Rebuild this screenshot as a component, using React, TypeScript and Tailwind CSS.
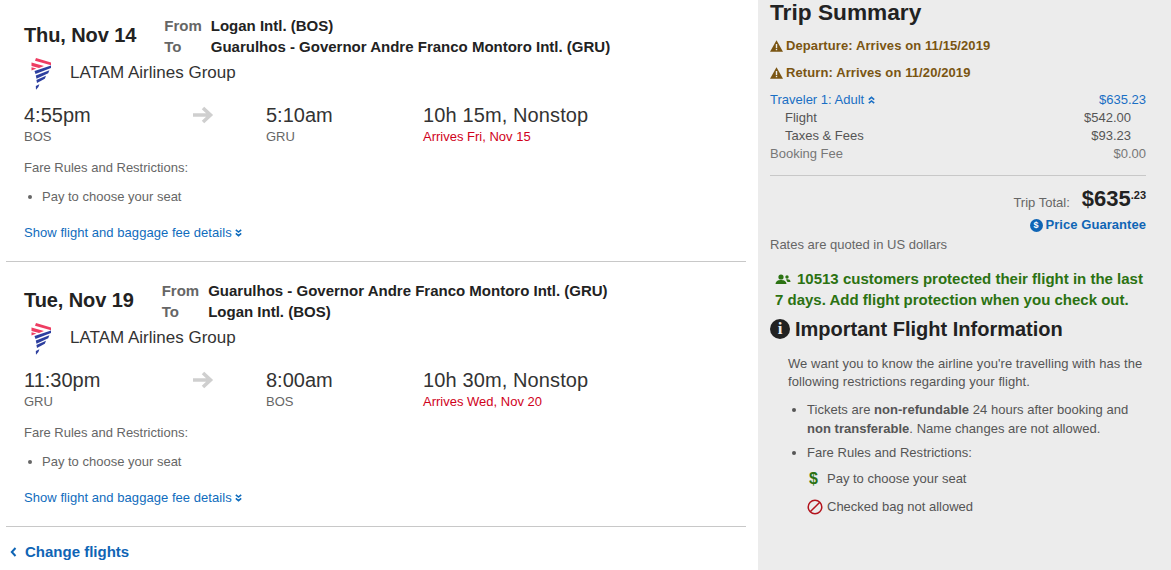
import React from "react";

const Logo = () => (
  <svg width="20" height="32" viewBox="0 0 20 32" className="ml-[7px] shrink-0">
    <path d="M5 0 L20 4.6 L20 7.2 L4 2.8 Z" fill="#ee3d62" />
    <path d="M0.5 4.4 L13 8 L8 10 L0.5 8 Z" fill="#ee3d62" />
    <path d="M0.5 9.2 L5.4 10.6 L0.5 12.6 Z" fill="#ee3d62" />
    <path d="M20 7.6 L20 10 L4.5 16 L3.5 13 Z" fill="#2d3f9f" />
    <path d="M18.4 12.2 L17.2 15.2 L5.5 20.8 L4.8 17.6 Z" fill="#2d3f9f" />
    <path d="M15 17.8 L13.8 20.8 L6 25 L5.4 22 Z" fill="#2d3f9f" />
    <path d="M8.4 26.2 L7.4 29 L5 31.8 L4.8 28 Z" fill="#2d3f9f" />
  </svg>
);

const ChevronsDown = ({ up = false }: { up?: boolean }) => (
  <svg width="7" height="8" viewBox="0 0 7 8" className={up ? "inline-block rotate-180" : "inline-block"}>
    <path d="M0.8 0.8 L3.5 3 L6.2 0.8 M0.8 4.4 L3.5 6.6 L6.2 4.4" fill="none" stroke="currentColor" strokeWidth="1.6" />
  </svg>
);

const Arrow = () => (
  <svg width="22" height="18" viewBox="0 0 22 18">
    <path d="M1 9 H18 M11 2 L18.5 9 L11 16" fill="none" stroke="#cfcfcf" strokeWidth="3.6" />
  </svg>
);

const Warn = () => (
  <svg width="13" height="12" viewBox="0 0 13 12" className="shrink-0">
    <path d="M6.5 0.3 L13 11.7 H0 Z" fill="#7a5512" />
    <rect x="5.8" y="4" width="1.4" height="4" fill="#ececec" />
    <rect x="5.8" y="8.8" width="1.4" height="1.4" fill="#ececec" />
  </svg>
);

type SegmentProps = {
  date: string;
  from: string;
  to: string;
  dep: string;
  depCode: string;
  arr: string;
  arrCode: string;
  duration: string;
  arrives: string;
};

const Segment = ({ date, from, to, dep, depCode, arr, arrCode, duration, arrives }: SegmentProps) => (
  <section className="ml-[6px] mr-[12px] h-[248px] border-b border-[#c8c8c8] px-[18px]">
    <div className="flex h-[42px] items-start">
      <h2 className="mt-[9px] mr-[28px] text-[20px] leading-[24px] font-bold tracking-[-0.1px] text-[#222]">{date}</h2>
      <div className="mt-[1px] text-[15px] leading-[21px] font-bold">
        <div className="flex"><span className="w-[46.5px] text-[#666]">From</span><span className="text-[#222]">{from}</span></div>
        <div className="flex"><span className="w-[46.5px] text-[#666]">To</span><span className="text-[#222]">{to}</span></div>
      </div>
    </div>
    <div className="mt-[2px] flex h-[32px] items-start">
      <Logo />
      <span className="mt-[3px] ml-[19px] text-[17px] leading-[24px] text-[#333]">LATAM Airlines Group</span>
    </div>
    <div className="mt-[13px] flex">
      <div className="w-[168px]">
        <div className="text-[20px] leading-[24px] text-[#333]">{dep}</div>
        <div className="mt-[2px] text-[13px] leading-[16px] text-[#666]">{depCode}</div>
      </div>
      <div className="w-[74px] pt-[3px]"><Arrow /></div>
      <div className="w-[157px]">
        <div className="text-[20px] leading-[24px] text-[#333]">{arr}</div>
        <div className="mt-[2px] text-[13px] leading-[16px] text-[#666]">{arrCode}</div>
      </div>
      <div>
        <div className="text-[20px] leading-[24px] tracking-[0.12px] text-[#333]">{duration}</div>
        <div className="mt-[2px] text-[13px] leading-[16px] text-[#d0021b]">{arrives}</div>
      </div>
    </div>
    <p className="mt-[15px] text-[13px] leading-[16px] text-[#666]">Fare Rules and Restrictions:</p>
    <ul className="mt-[13px] text-[13px] leading-[16px] text-[#666]">
      <li className="flex items-center">
        <span className="ml-[4px] mr-[10px] size-[4px] rounded-full bg-[#666]" />
        Pay to choose your seat
      </li>
    </ul>
    <a className="mt-[20px] flex items-center gap-[3px] text-[13px] leading-[16px] tracking-[0.05px] text-[#0f6cbd]">
      Show flight and baggage fee details <ChevronsDown />
    </a>
  </section>
);

const Row = ({ left, right, className }: { left: string; right: string; className: string }) => (
  <div className={"flex justify-between text-[13px] leading-[18px] " + className}>
    <span>{left}</span>
    <span>{right}</span>
  </div>
);

export default function App() {
  return (
    <div className="flex h-[570px] w-[1171px] overflow-hidden bg-white font-['Liberation_Sans',Arial,sans-serif]">
      <main className="w-[758px] shrink-0 pt-[14px]">
        <div className="flex flex-col gap-[17px]">
          <Segment date="Thu, Nov 14" from="Logan Intl. (BOS)" to="Guarulhos - Governor Andre Franco Montoro Intl. (GRU)" dep="4:55pm" depCode="BOS" arr="5:10am" arrCode="GRU" duration="10h 15m, Nonstop" arrives="Arrives Fri, Nov 15" />
          <Segment date="Tue, Nov 19" from="Guarulhos - Governor Andre Franco Montoro Intl. (GRU)" to="Logan Intl. (BOS)" dep="11:30pm" depCode="GRU" arr="8:00am" arrCode="BOS" duration="10h 30m, Nonstop" arrives="Arrives Wed, Nov 20" />
        </div>
        <a className="mt-[15px] ml-[10px] flex items-center gap-[8px] text-[15px] leading-[20px] font-bold text-[#0f65b5]">
          <svg width="7" height="10" viewBox="0 0 7 10"><path d="M5.5 1 L1.8 5 L5.5 9" fill="none" stroke="currentColor" strokeWidth="2" /></svg>
          Change flights
        </a>
      </main>
      <aside className="flex-1 bg-[#ececec] pl-[12px] pr-[25px] text-[13px]">
        <h1 className="text-[22.7px] leading-[24px] font-bold text-[#222]">Trip Summary</h1>
        <div className="mt-[14px] flex items-center gap-[3px] text-[13px] leading-[16px] font-bold tracking-[0.1px] text-[#7a5512]"><Warn />Departure: Arrives on 11/15/2019</div>
        <div className="mt-[11px] flex items-center gap-[3px] text-[13px] leading-[16px] font-bold tracking-[0.1px] text-[#7a5512]"><Warn />Return: Arrives on 11/20/2019</div>
        <div className="mt-[10px] flex justify-between text-[13px] leading-[18px] text-[#1a6fc4]">
          <span className="flex items-center gap-[4px]">Traveler 1: Adult <ChevronsDown up /></span>
          <span>$635.23</span>
        </div>
        <Row left="Flight" right="$542.00" className="px-[15px] text-[#555]" />
        <Row left="Taxes & Fees" right="$93.23" className="px-[15px] text-[#555]" />
        <Row left="Booking Fee" right="$0.00" className="text-[#777]" />
        <div className="mt-[12px] border-t border-[#c8c8c8] pt-[9px]">
          <div className="flex items-start justify-end text-[#666]">
            <span className="mt-[10px] mr-[12px] leading-[16px]">Trip Total:</span>
            <span className="text-[22px] leading-[28px] font-bold text-[#222]">$635</span>
            <span className="mt-[4px] text-[11px] leading-[12px] font-bold text-[#222]">.23</span>
          </div>
          <div className="mt-[4px] flex items-center justify-end gap-[3px] text-[13px] leading-[16px] font-bold tracking-[0.05px] text-[#0f65b5]">
            <span className="flex size-[13px] items-center justify-center rounded-full bg-[#0f65b5] text-[9px] text-white">$</span>
            Price Guarantee
          </div>
        </div>
        <p className="mt-[4px] text-[13px] leading-[16px] text-[#666]">Rates are quoted in US dollars</p>
        <p className="mt-[15px] pl-[5px] text-[15px] leading-[21px] font-bold text-[#2b7212]">
          <svg width="16" height="11" viewBox="0 0 16 11" className="mr-[6px] inline-block align-[-1px]">
            <circle cx="6" cy="3" r="2.6" fill="currentColor" />
            <path d="M0.5 10 C1 6.5 3.5 6 6 6 C8.5 6 11 6.5 11.5 10 Z" fill="currentColor" />
            <circle cx="12" cy="3" r="1.7" fill="currentColor" />
            <path d="M11 5.5 C13.5 5 15.5 5.5 15.5 8 H12.5 Z" fill="currentColor" />
          </svg>
          10513 customers protected their flight in the last 7 days. Add flight protection when you check out.
        </p>
        <h2 className="mt-[7px] flex items-center gap-[5px] text-[20px] leading-[24px] font-bold text-[#222]">
          <span className="flex size-[20px] items-center justify-center rounded-full bg-[#222] font-['Liberation_Serif',serif] text-[17px] text-[#ececec]">i</span>
          Important Flight Information
        </h2>
        <div className="pl-[18px] text-[#555]">
          <p className="mt-[14px] text-[13px] leading-[17.5px] tracking-[0.06px]">We want you to know the airline you're travelling with has the following restrictions regarding your flight.</p>
          <ul className="mt-[10px] text-[13px] leading-[19px] tracking-[0.03px]">
            <li className="relative pl-[19px]">
              <span className="absolute top-[8px] left-[4px] size-[4px] rounded-full bg-[#555]" />
              Tickets are <b>non-refundable</b> 24 hours after booking and <b>non transferable</b>. Name changes are not allowed.
            </li>
            <li className="relative mt-[5px] pl-[19px]">
              <span className="absolute top-[8px] left-[4px] size-[4px] rounded-full bg-[#555]" />
              Fare Rules and Restrictions:
            </li>
          </ul>
          <div className="mt-[8px] flex items-center pl-[20px] leading-[18px]">
            <span className="w-[19px] pl-[1px] text-[16px] font-bold text-[#2b7212]">$</span>Pay to choose your seat
          </div>
          <div className="mt-[10px] flex items-center pl-[19px] leading-[18px]">
            <svg width="16" height="16" viewBox="0 0 16 16" className="mr-[4px]">
              <circle cx="8" cy="8" r="6.8" fill="none" stroke="#b3141d" strokeWidth="1.5" />
              <path d="M3.2 12.8 L12.8 3.2" stroke="#b3141d" strokeWidth="1.5" />
            </svg>
            Checked bag not allowed
          </div>
        </div>
      </aside>
    </div>
  );
}
